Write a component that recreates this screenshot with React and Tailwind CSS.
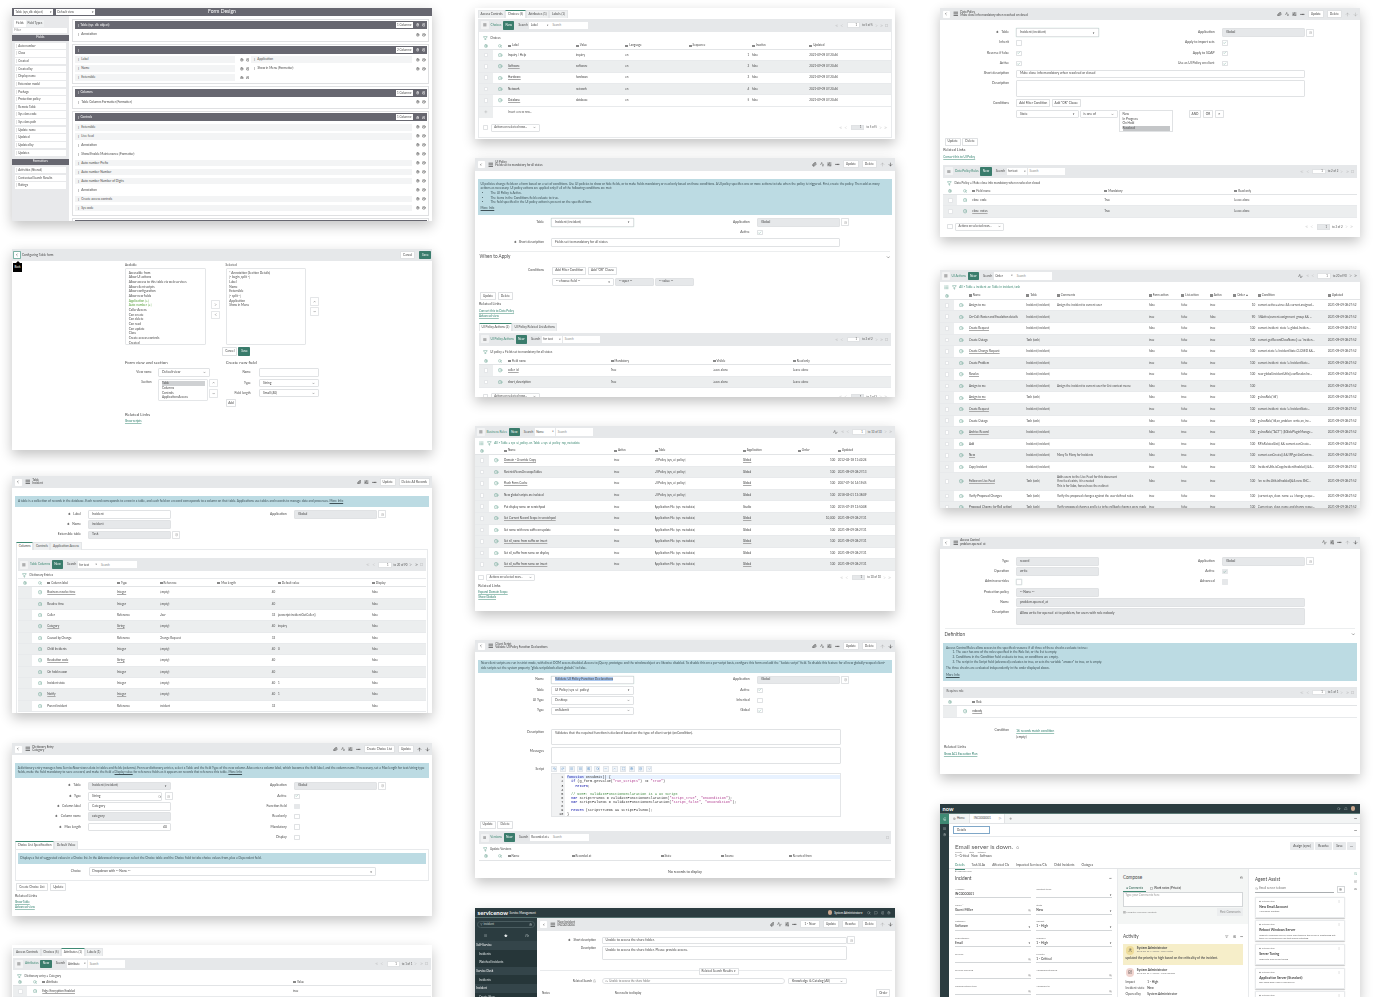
import React from "react";
import {
  Activity, ArrowDown, ArrowUp, Bell, Check, ChevronDown, ChevronLeft, ChevronRight, ChevronUp, ChevronsLeft,
  ChevronsRight, CircleHelp, CircleX, Clock, Filter, Home, Info, Lock, Menu, MessageSquare, Maximize, MoreHorizontal,
  Paperclip, Plus, Search, Settings, SlidersHorizontal, Star, User, Undo2, Redo2, List, SquarePen, Bookmark, FileText,
} from "lucide-react";

// everything below is measured in the coordinates of a 3x crop, the wrapper zooms it back down
const link = "text-[#2f7f6d] underline decoration-[#9cc4b9]";

function Card({ className, children }) {
  return (
    <section className={`w-[1260px] shrink-0 bg-white shadow-[0_16px_36px_rgba(0,0,0,0.24)] overflow-hidden ${className}`}>
      <div className="blur-[0.7px] h-full">{children}</div>
    </section>
  );
}

function Btn({ children, className = "" }) {
  return (
    <span className={`inline-flex items-center justify-center h-[24px] px-[6px] bg-white border border-[#dfe1e3] rounded-[2px] text-[9.5px] text-[#4a4a4a] whitespace-nowrap ${className}`}>
      {children}
    </span>
  );
}

function HeadIcons({ clip = true, pulse = true, sliders = true, dots = true, up = true, down = true, children }) {
  return (
    <div className="ml-auto flex items-center gap-[9px] text-[#444]">
      {clip && <Paperclip size={14} strokeWidth={3} />}
      {pulse && <Activity size={14} strokeWidth={2} />}
      {sliders && <SlidersHorizontal size={14} strokeWidth={2.5} />}
      {dots && <MoreHorizontal size={14} strokeWidth={3} />}
      {children}
      {up && <ArrowUp size={15} strokeWidth={up === "dim" ? 1.5 : 2.5} className={up === "dim" ? "text-[#999]" : ""} />}
      {down && <ArrowDown size={15} strokeWidth={down === "dim" ? 1.5 : 2.5} className={down === "dim" ? "text-[#999]" : ""} />}
    </div>
  );
}

function Header({ title, sub, children }) {
  return (
    <div className="flex items-center h-[37px] bg-[#e6e8ea] pl-[8px] pr-[6px]">
      <span className="flex items-center justify-center w-[21px] h-[21px] bg-white rounded-[2px]">
        <ChevronLeft size={11} strokeWidth={3} color="#333" />
      </span>
      <Menu size={17} strokeWidth={3} color="#444" className="ml-[9px]" />
      <div className="ml-[6px] text-[9px] leading-[10px] text-[#444]">
        <div>{title}</div>
        <div>{sub}</div>
      </div>
      {children}
    </div>
  );
}

function Note({ children, className = "" }) {
  return <div className={`bg-[#bcdbe3] text-[9.5px] leading-[14px] text-[#3f5258] px-[8px] py-[8px] ${className}`}>{children}</div>;
}

function Req() {
  return <span className="text-[#4a4a4a] text-[8px] mr-[7px]">✱</span>;
}

function Row({ label, req, right, className = "", children }) {
  return (
    <div className={`flex items-center h-[26px] mb-[5px] ${className}`}>
      <div className={`text-right text-[10px] text-[#4a4a4a] whitespace-nowrap ${right ? "w-[224px]" : "w-[207px]"}`}>
        {req && <Req />}
        {label}
      </div>
      <div className={`flex items-center gap-[5px] ${right ? "ml-[23px]" : "ml-[22px]"}`}>{children}</div>
    </div>
  );
}

function Box({ children, gray, focus, arrow, className = "w-[247px] h-[26px]" }) {
  return (
    <div className={`flex items-center justify-between px-[8px] rounded-[3px] border text-[10px] text-[#4a4a4a] whitespace-nowrap overflow-hidden ${gray ? "bg-[#e6e8ea] border-[#e0e2e4]" : "bg-white border-[#e0e2e4]"} ${focus ? "border-[#7fb3a6] shadow-[0_0_3px_#7fb3a6]" : ""} ${className}`}>
      <span>{children}</span>
      {arrow === "solid" && <span className="text-[8px]">▼</span>}
      {arrow === "line" && <ChevronDown size={9} strokeWidth={3} />}
    </div>
  );
}

function LookupBtn() {
  return (
    <span className="flex items-center justify-center w-[24px] h-[24px] bg-white border border-[#e0e2e4] rounded-[2px]">
      <Info size={10} color="#888" />
    </span>
  );
}

function Tick({ on, gray, focus }) {
  return (
    <span className={`flex items-center justify-center w-[16px] h-[16px] rounded-[2px] border ${gray ? "bg-[#e6e8ea] border-[#e6e8ea]" : "bg-white border-[#e0e2e4]"} ${focus ? "border-[#7fb3a6] shadow-[0_0_3px_#7fb3a6]" : ""}`}>
      {on && <Check size={11} strokeWidth={2.5} color="#3f8a74" />}
    </span>
  );
}

function Tabs({ items, active, className = "" }) {
  return (
    <div className={`flex items-end h-[24px] text-[9.5px] text-[#4a4a4a] ${className}`}>
      {items.map((t, i) => (
        <span
          key={t}
          className={`flex items-center h-[24px] px-[5px] border-x border-[#e4e6e8] whitespace-nowrap ${i === active ? "bg-white border-t-2 border-t-[#3f8a74]" : "bg-[#eef0f1] border-t border-t-[#e4e6e8]"}`}
        >
          {t}
        </span>
      ))}
    </div>
  );
}

function Pager({ text, light, w = "w-[40px]", flush }) {
  const arrow = light ? "#999" : "#555";
  return (
    <div className={`flex items-center gap-[6px] text-[8.5px] text-[#5a5a5a] whitespace-nowrap ${flush ? "" : "ml-auto"}`}>
      <ChevronsLeft size={10} color="#999" />
      <ChevronLeft size={10} color="#999" />
      <span className={`flex items-center justify-end h-[17px] px-[6px] ml-[4px] bg-white border border-[#e0e2e4] ${w}`}>1</span>
      <span>{text}</span>
      <ChevronRight size={10} color={arrow} strokeWidth={light ? 2 : 3} />
      <ChevronsRight size={10} color={arrow} strokeWidth={light ? 2 : 3} />
    </div>
  );
}

function ListBar({ title, search, pager, className = "", end, pulse, dark }) {
  return (
    <div className={`flex items-center h-[38px] bg-[#e6e8ea] pl-[6px] pr-[8px] ${className}`}>
      <span className="flex items-center justify-center w-[24px] h-[24px] bg-[#f2f3f4] rounded-[2px]">
        <Menu size={11} strokeWidth={3} color="#444" />
      </span>
      <span className="ml-[5px] text-[9.5px] text-[#3f8a74] whitespace-nowrap">{title}</span>
      <span className="ml-[5px] flex items-center justify-center w-[34px] h-[26px] bg-[#3a7c6c] rounded-[2px] text-white text-[9.5px]">New</span>
      <span className="ml-[12px] text-[9.5px] text-[#4a4a4a]">Search</span>
      <span className="ml-[5px] flex items-center justify-between w-[62px] h-[22px] px-[4px] bg-white text-[9px] text-[#4a4a4a] whitespace-nowrap overflow-hidden">
        {search}
        <span className="text-[7px]">▼</span>
      </span>
      <span className="ml-[1px] flex items-center w-[113px] h-[22px] px-[6px] bg-white text-[9px] text-[#888]">Search</span>
      {pulse && <Activity size={14} color="#444" className="ml-auto mr-[8px]" />}
      {pager && <Pager text={pager} light={!dark} flush={pulse} />}
      {end !== false && <Maximize size={9} color="#888" className={pager ? "ml-[6px]" : "ml-auto"} />}
    </div>
  );
}

function FilterRow({ text, list, className = "mt-[8px]" }) {
  return (
    <div className={`flex items-center h-[18px] pl-[12px] text-[9px] text-[#4a4a4a] ${className}`}>
      {list && <List size={14} color="#3f8a74" className="mr-[10px]" />}
      <Filter size={14} color="#3f8a74" />
      <span className={`ml-[8px] ${list ? "text-[#3f8a74]" : ""}`}>{text}</span>
    </div>
  );
}

function ColHead({ cols, className = "h-[22px]", noSearch }) {
  return (
    <div className={`flex items-center border-b-2 border-[#e2e4e6] text-[9px] text-[#4a4a4a] ${className}`}>
      <span className="w-[42px] flex justify-center"><Settings size={12} color="#3f8a74" /></span>
      <span className="w-[45px] flex justify-center">{!noSearch && <Search size={12} color="#3f8a74" />}</span>
      {cols.map((c) => (
        <span key={c.label} className={`flex items-center gap-[3px] whitespace-nowrap ${c.w}`}>
          <span className="w-[9px] h-[7px] bg-[#888]" />
          {c.label}
        </span>
      ))}
    </div>
  );
}

function RowCell({ col, value }) {
  return (
    <span className={`whitespace-nowrap overflow-hidden ${col.w} ${col.right ? "text-right pr-[8px]" : ""} ${col.link ? "underline decoration-[#aaa] text-[#444]" : ""}`}>
      {value}
    </span>
  );
}

function ListRows({ cols, rows, noBox, tall = "h-[34px]" }) {
  return rows.map((r, i) => (
    <div key={i} className={`flex items-center border-b border-[#e8eaec] text-[9px] text-[#4a4a4a] ${r.tall ? "h-[52px]" : tall} ${i % 2 ? "bg-[#eceeef]" : "bg-white"}`}>
      <span className="w-[42px] h-full flex items-center justify-center bg-[#eceeef]">
        {!noBox && <span className="w-[14px] h-[14px] bg-white border border-[#e4e6e8] rounded-[2px]" />}
      </span>
      <span className="w-[45px] flex justify-center"><Info size={13} color="#3f8a74" /></span>
      {cols.map((c, j) => (
        <RowCell key={c.label} col={c} value={r[j]} />
      ))}
    </div>
  ));
}

function ActionsRow({ text, className = "" }) {
  return (
    <div className={`flex items-center h-[26px] pl-[12px] pr-[10px] ${className}`}>
      <span className="w-[16px] h-[16px] bg-white border border-[#e0e2e4] rounded-[2px]" />
      <Box arrow="line" className="ml-[7px] w-[148px] h-[24px]"><span className="text-[8.5px]">Actions on selected rows...</span></Box>
      <Pager text={text} light w="w-[40px] !bg-[#e6e8ea]" />
    </div>
  );
}

function Related({ links, className = "", big }) {
  return (
    <div className={className}>
      <div className={`${big ? "text-[13px]" : "text-[11.5px]"} text-[#4a4a4a] leading-[14px]`}>Related Links</div>
      <div className="mt-[6px] text-[9px] leading-[14px]">
        {links.map((l) => (
          <div key={l} className={link}>{l}</div>
        ))}
      </div>
    </div>
  );
}

/* ---------- first column ---------- */

const fdFields = ["Auto number", "Class", "Created", "Created by", "Display name", "Extension model", "Package", "Protection policy", "Remote Table", "Sys class code", "Sys class path", "Update name", "Updated", "Updated by", "Updates"];

function FdHead({ title, columns }) {
  return (
    <div className="flex items-center h-[24px] bg-[#676770] pl-[6px] pr-[5px] text-[9.5px] text-white">
      <span>⋮ {title}</span>
      <span className="ml-auto flex items-center h-[18px] px-[2px] bg-white text-[#4a4a4a] text-[9px]">{columns} ▾</span>
      <Settings size={11} strokeWidth={3} className="ml-[8px]" />
      <CircleX size={11} strokeWidth={3} className="ml-[7px]" />
    </div>
  );
}

function FdRow({ name, gray }) {
  return (
    <div className="flex items-center h-[27px] text-[9.5px] text-[#4a4a4a]">
      <span className={`flex-1 flex items-center h-[20px] pl-[6px] ${gray ? "bg-[#f3f4f5]" : ""}`}>⋮&nbsp;&nbsp;{name}</span>
      <span className="flex items-center justify-end gap-[7px] w-[46px] pr-[4px]">
        <Settings size={11} strokeWidth={3} color="#555" />
        <CircleX size={11} strokeWidth={3} color="#555" />
      </span>
    </div>
  );
}

function FdSection({ children, className = "" }) {
  return <div className={`border-2 border-[#dfe0e2] p-[4px] mb-[6px] ${className}`}>{children}</div>;
}

function FormDesign() {
  return (
    <Card className="h-[639px]">
      <div className="grid grid-cols-3 items-center h-[25px] bg-[#676770] text-white">
        <div className="flex gap-[8px] pl-[6px]">
          <span className="flex items-center justify-between w-[118px] h-[19px] px-[4px] bg-white text-[9px] text-[#4a4a4a]">Table (sys_db_object)<span>▾</span></span>
          <span className="flex items-center justify-between w-[118px] h-[19px] px-[4px] bg-white text-[9px] text-[#4a4a4a]">Default view<span>▾</span></span>
        </div>
        <div className="text-center text-[15px]">Form Design</div>
      </div>
      <div className="flex h-[614px]">
        <div className="w-[170px] shrink-0 bg-[#e8e9eb]">
          <div className="flex items-end h-[32px] pl-[6px] text-[9px] text-[#4a4a4a]">
            <span className="flex items-center h-[22px] px-[6px] bg-white">Fields</span>
            <span className="flex items-center h-[22px] px-[6px] bg-[#eef0f1]">Field Types</span>
          </div>
          <div className="mx-[4px] mt-[2px] h-[17px] pl-[3px] bg-white text-[9px] text-[#888] leading-[17px]">Filter</div>
          <div className="mt-[5px] h-[17px] bg-[#676770] text-white text-[9.5px] text-center leading-[17px]">Fields</div>
          <div className="flex flex-col gap-[4px] px-[8px] mt-[6px]">
            {fdFields.map((f) => (
              <div key={f} className="h-[19px] pl-[4px] bg-white text-[9px] text-[#4a4a4a] leading-[19px]">⁞&nbsp;&nbsp;{f}</div>
            ))}
          </div>
          <div className="mt-[10px] h-[17px] bg-[#676770] text-white text-[9.5px] text-center leading-[17px]">Formatters</div>
          <div className="flex flex-col gap-[4px] px-[8px] mt-[6px]">
            {["Activities (filtered)", "Contextual Search Results", "Ratings"].map((f) => (
              <div key={f} className="h-[19px] pl-[4px] bg-white text-[9px] text-[#4a4a4a] leading-[19px]">⁞&nbsp;&nbsp;{f}</div>
            ))}
          </div>
        </div>
        <div className="flex-1 pl-[11px] pr-[8px] pt-[8px] min-w-0">
          <FdSection>
            <FdHead title="Table (sys_db_object)" columns="1 Column" />
            <div className="pt-[3px]"><FdRow name="Annotation" /></div>
          </FdSection>
          <FdSection>
            <FdHead title="" columns="2 Column" />
            <div className="flex pt-[4px]">
              <div className="flex-1">
                <FdRow name="Label" gray />
                <FdRow name="Name" gray />
                <FdRow name="Extensible" gray />
              </div>
              <div className="flex-1">
                <FdRow name="Application" gray />
                <FdRow name="Show in Menu (Formatter)" />
              </div>
            </div>
          </FdSection>
          <FdSection>
            <FdHead title="Columns" columns="1 Column" />
            <div className="pt-[3px]"><FdRow name="Table Columns Formatter (Formatter)" /></div>
          </FdSection>
          <FdSection>
            <FdHead title="Controls" columns="1 Column" />
            <div className="pt-[4px] pb-[2px]">
              <FdRow name="Extensible" gray />
              <FdRow name="Live feed" gray />
              <FdRow name="Annotation" />
              <FdRow name="Show/Enable Maintenance (Formatter)" />
              <FdRow name="Auto number Prefix" gray />
              <FdRow name="Auto number Number" gray />
              <FdRow name="Auto number Number of Digits" gray />
              <FdRow name="Annotation" />
              <FdRow name="Create access controls" gray />
              <FdRow name="Sys code" gray />
            </div>
          </FdSection>
          <FdSection>
            <FdHead title="Application Access" columns="1 Column" />
          </FdSection>
        </div>
      </div>
    </Card>
  );
}

function ListBoxItems({ items, className = "" }) {
  return (
    <div className={`border border-[#e4e6e8] rounded-[3px] px-[8px] py-[5px] text-[9.5px] leading-[14px] text-[#4a4a4a] whitespace-nowrap overflow-hidden ${className}`}>
      {items.map((t) => (
        <div key={t} className={t.includes("[+]") ? "text-[#5aa33f]" : ""}>{t}</div>
      ))}
    </div>
  );
}

function SquareBtn({ children }) {
  return <span className="flex items-center justify-center w-[26px] h-[26px] bg-white border border-[#e4e6e8] rounded-[2px]">{children}</span>;
}

function UpDown() {
  return (
    <div className="flex flex-col gap-[5px]">
      <SquareBtn><ChevronUp size={10} strokeWidth={3} color="#555" /></SquareBtn>
      <SquareBtn><ChevronDown size={10} strokeWidth={3} color="#555" /></SquareBtn>
    </div>
  );
}

function Configure() {
  return (
    <Card className="h-[603px]">
      <div className="relative flex items-center h-[36px] bg-[#e6e8ea] pl-[4px] pr-[2px] text-[9.5px] text-[#4a4a4a]">
        <span className="flex items-center justify-center w-[22px] h-[22px] bg-white rounded-[2px] border-2 border-[#7fb3a6]">
          <ChevronLeft size={11} strokeWidth={3} color="#333" />
        </span>
        <span className="ml-[4px]">Configuring Table form</span>
        <Btn className="ml-auto">Cancel</Btn>
        <span className="ml-[12px] flex items-center justify-center w-[36px] h-[24px] bg-[#3a7c6c] text-white rounded-[2px]">Save</span>
        <span className="absolute left-[11px] top-[35px] w-0 h-0 border-x-[8px] border-x-transparent border-b-[8px] border-b-black" />
        <span className="absolute left-[2px] top-[43px] w-[29px] h-[26px] flex items-center justify-center bg-black text-white text-[8.5px]">Back</span>
      </div>
      <div className="ml-[339px] w-[590px] text-[9.5px] text-[#4a4a4a]">
        <div className="flex mt-[5px]">
          <div>
            <div className="h-[16px] text-[9px] leading-[14px]">Available</div>
            <ListBoxItems
              className="w-[242px] h-[232px]"
              items={["Accessible from", "Allow UI actions", "Allow access to this table via web services", "Allow client scripts", "Allow configuration", "Allow new fields", "Application [+]", "Auto number [+]", "Caller Access", "Can create", "Can delete", "Can read", "Can update", "Class", "Create access controls", "Created"]}
            />
          </div>
          <div className="w-[60px] flex flex-col items-center gap-[5px] pt-[113px]">
            <SquareBtn><ChevronRight size={10} strokeWidth={3} color="#555" /></SquareBtn>
            <SquareBtn><ChevronLeft size={10} strokeWidth={3} color="#555" /></SquareBtn>
          </div>
          <div>
            <div className="h-[16px] text-[9px] leading-[14px]">Selected</div>
            <ListBoxItems
              className="w-[242px] h-[232px]"
              items={["* Annotation (Section Details)", "|- begin_split -|", "Label", "Name", "Extensible", "|- split -|", "Application", "Show in Menu"]}
            />
          </div>
          <div className="ml-[12px] pt-[103px]"><UpDown /></div>
        </div>
        <div className="flex justify-center gap-[3px] mt-[5px] w-[668px]">
          <Btn className="!h-[26px]">Cancel</Btn>
          <span className="flex items-center justify-center w-[36px] h-[26px] bg-[#3a7c6c] text-white rounded-[2px]">Save</span>
        </div>
        <div className="flex mt-[14px] text-[13px]">
          <div className="w-[302px]">Form view and section</div>
          <div>Create new field</div>
        </div>
        <div className="flex mt-[5px]">
          <div className="w-[302px]">
            <div className="flex items-center">
              <span className="w-[80px] text-right">View name</span>
              <Box arrow="line" className="ml-[20px] w-[155px] h-[25px]">Default view</Box>
            </div>
            <div className="flex mt-[6px]">
              <span className="w-[80px] text-right pt-[4px]">Section</span>
              <div className="ml-[20px] w-[150px] h-[68px] border border-[#e4e6e8] rounded-[3px] px-[8px] py-[5px] leading-[14px] overflow-hidden">
                <div className="bg-[#cfd1d3]">Table</div>
                <div>Columns</div>
                <div>Controls</div>
                <div>Application Access</div>
                <div>...</div>
              </div>
              <div className="ml-[3px]"><UpDown /></div>
            </div>
          </div>
          <div>
            <div className="flex items-center">
              <span className="w-[75px] text-right">Name</span>
              <Box className="ml-[26px] w-[178px] h-[25px]" />
            </div>
            <div className="flex items-center mt-[7px]">
              <span className="w-[75px] text-right">Type</span>
              <Box arrow="line" className="ml-[26px] w-[178px] h-[25px]">String</Box>
            </div>
            <div className="flex items-center mt-[5px]">
              <span className="w-[75px] text-right">Field length</span>
              <Box arrow="line" className="ml-[26px] w-[178px] h-[25px]">Small (40)</Box>
            </div>
            <Btn className="mt-[6px] w-[32px]">Add</Btn>
          </div>
        </div>
        <Related big className="mt-[16px]" links={["Show scripts"]} />
      </div>
    </Card>
  );
}

const columnCols = [
  { label: "Column label", w: "w-[209px]", link: true },
  { label: "Type", w: "w-[128px]", link: true },
  { label: "Reference", w: "w-[173px]" },
  { label: "Max length", w: "w-[182px]", right: true },
  { label: "Default value", w: "w-[282px]" },
  { label: "Display", w: "w-[100px]" },
];

const columnRows = [
  ["Business resolve time", "Integer", "(empty)", "40", "", "false"],
  ["Resolve time", "Integer", "(empty)", "40", "", "false"],
  ["Caller", "Reference", "User", "32", "javascript:incidentGetCaller()", "false"],
  ["Category", "String", "(empty)", "40", "inquiry", "false"],
  ["Caused by Change", "Reference", "Change Request", "32", "", "false"],
  ["Child Incidents", "Integer", "(empty)", "40", "0", "false"],
  ["Resolution code", "String", "(empty)", "40", "", "false"],
  ["On hold reason", "Integer", "(empty)", "40", "", "false"],
  ["Incident state", "Integer", "(empty)", "40", "1", "false"],
  ["Notify", "Integer", "(empty)", "40", "1", "false"],
  ["Parent Incident", "Reference", "Incident", "32", "", "false"],
];

function TableIncident() {
  return (
    <Card className="h-[712px]">
      <Header title="Table" sub="Incident">
        <HeadIcons pulse={false} up={false} down={false}>
          <Btn>Update</Btn>
          <Btn>Delete All Records</Btn>
        </HeadIcons>
      </Header>
      <div className="px-[10px]">
        <Note className="mt-[24px] h-[31px] !py-[1px] leading-[29px]">
          A table is a collection of records in the database. Each record corresponds to a row in a table, and each field on a record corresponds to a column on that table. Applications use tables and records to manage data and processes. <span className="underline">More Info</span>
        </Note>
      </div>
      <div className="flex mt-[10px]">
        <div className="w-[600px]">
          <Row label="Label" req><Box>Incident</Box></Row>
          <Row label="Name" req><Box gray>incident</Box></Row>
          <Row label="Extensible table"><Box gray>Task</Box><LookupBtn /></Row>
        </div>
        <div>
          <Row label="Application" right><Box gray>Global</Box><LookupBtn /></Row>
        </div>
      </div>
      <div className="mx-[12px] mt-[3px]">
        <Tabs items={["Columns", "Controls", "Application Access"]} active={0} />
        <div className="border border-[#e8eaec] px-[4px] pt-[24px] pb-[2px] -mt-[1px]">
          <ListBar title="Table Columns" search="for text" pager="to 20 of 90" dark />
          <FilterRow text="Dictionary Entries" className="mt-[4px]" />
          <ColHead cols={columnCols} className="h-[27px] border-t border-t-[#e8eaec]" />
          <ListRows cols={columnCols} rows={columnRows} noBox />
        </div>
      </div>
    </Card>
  );
}

function DictEntry() {
  return (
    <Card className="h-[520px]">
      <Header title="Dictionary Entry" sub="Category">
        <HeadIcons>
          <Btn>Create Choice List</Btn>
          <Btn>Update</Btn>
        </HeadIcons>
      </Header>
      <div className="px-[9px]">
        <Note className="mt-[23px] h-[46px]">
          A dictionary entry manages how ServiceNow stores data in tables and fields (columns). For new dictionary entries, select a Table and the field Type of the new column. Also enter a column label, which becomes the field label, and the column name. If necessary, set a Max length for text/string type fields, make the field mandatory to save a record, and make the field a <span className="underline">Display value</span> for reference fields as it appears on records that reference this table. <span className="underline">More Info</span>
        </Note>
      </div>
      <div className="flex mt-[10px]">
        <div className="w-[600px]">
          <Row label="Table" req><Box gray arrow="solid">Incident [incident]</Box></Row>
          <Row label="Type" req><Box className="w-[222px] h-[26px]">String</Box><Search size={10} color="#777" className="-ml-[18px] mr-[5px]" /><LookupBtn /></Row>
          <Row label="Column label" req><Box>Category</Box></Row>
          <Row label="Column name" req><Box gray>category</Box></Row>
          <Row label="Max length" req><Box className="w-[247px] h-[26px] justify-end"><span className="ml-[208px]">40</span></Box></Row>
        </div>
        <div>
          <Row label="Application" right><Box gray>Global</Box><LookupBtn /></Row>
          <Row label="Active" right><Tick on /></Row>
          <Row label="Function field" right><Tick gray /></Row>
          <Row label="Read only" right><Tick /></Row>
          <Row label="Mandatory" right><Tick /></Row>
          <Row label="Display" right><Tick /></Row>
        </div>
      </div>
      <div className="mx-[9px] mt-[-8px]">
        <Tabs items={["Choice List Specification", "Default Value"]} active={0} />
        <div className="border border-[#e8eaec] px-[5px] pt-[10px] pb-[14px]">
          <Note className="h-[32px] !py-[1px] leading-[30px]">
            Displays a list of suggested values in a Choice list. In the Advanced view you can select the Choice table and the Choice field to take choice values from, plus a Dependent field.
          </Note>
          <div className="flex items-center mt-[11px]">
            <span className="w-[190px] text-right text-[10px] text-[#4a4a4a]">Choice</span>
            <Box arrow="solid" className="ml-[23px] w-[862px] h-[25px]">Dropdown with -- None --</Box>
          </div>
        </div>
        <div className="flex gap-[8px] mt-[5px] pl-[4px]">
          <Btn>Create Choice List</Btn>
          <Btn>Update</Btn>
        </div>
        <Related className="mt-[8px]" links={["Show Table", "Advanced view"]} />
      </div>
    </Card>
  );
}

const attrCols = [
  { label: "Attribute", w: "w-[752px]", link: true },
  { label: "Value", w: "w-[200px]" },
];

function Attributes() {
  return (
    <Card className="h-[200px]">
      <div className="px-[4px] pt-[10px]">
        <Tabs items={["Access Controls", "Choices (5)", "Attributes (1)", "Labels (1)"]} active={2} />
        <ListBar className="mt-[4px]" title="Attributes" search="Attribute" pager="to 1 of 1" />
        <FilterRow text="Dictionary entry = Category" />
        <ColHead cols={attrCols} />
        <ListRows cols={attrCols} rows={[["Edge Encryption Enabled", "true"]]} />
      </div>
    </Card>
  );
}

/* ---------- second column ---------- */

const choiceCols = [
  { label: "Label", w: "w-[204px]", link: true },
  { label: "Value", w: "w-[148px]" },
  { label: "Language", w: "w-[190px]" },
  { label: "Sequence", w: "w-[190px]", right: true },
  { label: "Inactive", w: "w-[172px]" },
  { label: "Updated", w: "w-[200px]" },
];

function Choices() {
  return (
    <Card className="h-[394px]">
      <div className="px-[9px] pt-[5px]">
        <Tabs items={["Access Controls", "Choices (5)", "Attributes (1)", "Labels (1)"]} active={1} />
        <div className="border-x border-b border-[#e8eaec] mt-[4px] pb-[14px]">
          <ListBar title="Choices" search="Label" pager="to 5 of 5" />
          <FilterRow text="Choices" className="mt-[10px]" />
          <ColHead cols={choiceCols} className="h-[22px] mt-[5px]" />
          <ListRows
            cols={choiceCols}
            rows={[
              ["Inquiry / Help", "inquiry", "en", "1", "false", "2021-09-09 07:20:46"],
              ["Software", "software", "en", "2", "false", "2021-09-09 07:20:46"],
              ["Hardware", "hardware", "en", "3", "false", "2021-09-09 07:20:46"],
              ["Network", "network", "en", "4", "false", "2021-09-09 07:20:46"],
              ["Database", "database", "en", "5", "false", "2021-09-09 07:20:46"],
            ]}
          />
          <div className="flex items-center h-[34px] text-[9px] text-[#5a5a5a]">
            <span className="w-[42px] h-full flex items-center justify-center bg-[#eceeef]"><Plus size={11} color="#999" /></span>
            <span className="ml-[45px]">Insert a new row...</span>
          </div>
          <ActionsRow text="to 5 of 5" className="mt-[16px]" />
        </div>
      </div>
    </Card>
  );
}

const policyActionCols = [
  { label: "Field name", w: "w-[308px]", link: true },
  { label: "Mandatory", w: "w-[306px]" },
  { label: "Visible", w: "w-[241px]" },
  { label: "Read only", w: "w-[200px]" },
];

function UiPolicy() {
  return (
    <Card className="h-[715px]">
      <Header title="UI Policy" sub="Fields set to mandatory for all states">
        <HeadIcons up="dim">
          <Btn>Update</Btn>
          <Btn>Delete</Btn>
        </HeadIcons>
      </Header>
      <div className="px-[9px]">
        <Note className="mt-[25px] h-[107px]">
          UI policies change fields on a form based on a set of conditions. Use UI policies to show or hide fields, or to make fields mandatory or read only based on those conditions. A UI policy specifies one or more actions to take when the policy is triggered. First, create the policy. Then add as many actions as necessary. UI policy actions are applied only if all of the following conditions are met:
          <ul className="list-disc pl-[30px]">
            <li>The UI Policy is Active.</li>
            <li>The items in the Conditions field evaluate to true.</li>
            <li>The field specified in the UI policy action is present on the specified form.</li>
          </ul>
          <div className="underline mt-[2px]">More Info</div>
        </Note>
      </div>
      <div className="flex mt-[10px]">
        <div className="w-[600px]">
          <Row label="Table"><Box focus arrow="solid">Incident [incident]</Box></Row>
        </div>
        <div>
          <Row label="Application" right><Box gray>Global</Box><LookupBtn /></Row>
          <Row label="Active" right><Tick on /></Row>
        </div>
      </div>
      <Row label="Short description" req className="-mt-[1px]"><Box className="w-[865px] h-[26px]">Fields set to mandatory for all states</Box></Row>
      <div className="flex items-center justify-between h-[33px] mx-[14px] mt-[12px] border-t border-[#eceeef] text-[14px] text-[#4a4a4a]">
        When to Apply
        <ChevronDown size={14} strokeWidth={2.5} />
      </div>
      <div className="flex items-center h-[25px] mt-[14px]">
        <span className="w-[207px] text-right text-[10px] text-[#4a4a4a]">Conditions</span>
        <div className="ml-[25px] flex gap-[5px]"><Btn>Add Filter Condition</Btn><Btn>Add "OR" Clause</Btn></div>
      </div>
      <div className="flex gap-[4px] ml-[232px] mt-[8px]">
        <Box arrow="solid" className="w-[185px] h-[25px]">-- choose field --</Box>
        <Box gray className="w-[116px] h-[25px]">-- oper --</Box>
        <Box gray className="w-[116px] h-[25px]">-- value --</Box>
      </div>
      <div className="flex gap-[5px] ml-[15px] mt-[19px]"><Btn>Update</Btn><Btn>Delete</Btn></div>
      <Related className="ml-[12px] mt-[7px]" links={["Convert this to Data Policy", "Advanced view"]} />
      <div className="mx-[12px] mt-[14px]">
        <Tabs items={["UI Policy Actions (2)", "UI Policy Related List Actions"]} active={0} />
        <ListBar title="UI Policy Actions" search="for text" pager="to 2 of 2" className="mt-[6px]" />
        <FilterRow text="UI policy = Fields set to mandatory for all states" className="mt-[10px]" />
        <ColHead cols={policyActionCols} className="h-[24px] mt-[7px]" />
        <ListRows
          cols={policyActionCols}
          rows={[
            ["caller_id", "True", "Leave alone", "Leave alone"],
            ["short_description", "True", "Leave alone", "Leave alone"],
          ]}
        />
        <ActionsRow text="to 2 of 2" className="mt-[13px]" />
      </div>
    </Card>
  );
}

const ruleCols = [
  { label: "Name", w: "w-[330px]", link: true },
  { label: "Active", w: "w-[122px]" },
  { label: "Table", w: "w-[265px]" },
  { label: "Application", w: "w-[165px]", link: true },
  { label: "Order", w: "w-[120px]", right: true },
  { label: "Updated", w: "w-[170px]" },
];

function BusinessRules() {
  const filled = (name, table, app, order, upd) => [name, "true", table, app, order, upd];
  const ui = "UI Policy [sys_ui_policy]";
  const meta = "Application File [sys_metadata]";
  return (
    <Card className="h-[554px]">
      <ListBar title="Business Rules" search="Name" pager="to 10 of 10" end={false} pulse className="!h-[36px]" />
      <FilterRow list text="All > Table = sys_ui_policy .or. Table = sys_ui_policy_rsp_metadata" className="mt-[7px]" />
      <ColHead cols={ruleCols} noSearch className="h-[24px] mt-[3px]" />
      <ListRows
        cols={ruleCols}
        tall="h-[34.7px]"
        rows={[
          filled("Domain - Override Copy", ui, "Global", "100", "2012-02-18 11:42:24"),
          filled("RestrictViewsOn.scopeTables", ui, "Global", "100", "2021-09-09 08:27:13"),
          filled("Flush Form Cache", ui, "Global", "100", "2007-07-16 14:19:45"),
          filled("New global scripts are isolated", ui, "Global", "100", "2018-03-01 13:38:09"),
          filled("Put display name on scratchpad", meta, "Studio", "100", "2015-07-29 12:50:08"),
          filled("Set Current Record Scope in scratchpad", meta, "Global", "10,000", "2021-09-09 08:27:31"),
          filled("Set name with new suffix on update", meta, "Global", "100", "2021-09-09 08:27:31"),
          filled("Set sil_name from suffix on insert", meta, "Global", "100", "2021-09-09 08:27:31"),
          filled("Set sil_suffix from name on display", meta, "Global", "100", "2021-09-09 08:27:31"),
          filled("Set sil_suffix from name on insert", meta, "Global", "100", "2021-09-09 08:27:31"),
        ]}
      />
      <ActionsRow text="to 10 of 10" className="mt-[7px] !pl-[10px]" />
      <Related className="ml-[10px] mt-[6px]" links={["Expand Domain Scope", "Show Globals"]} />
    </Card>
  );
}

function Code({ c, children }) {
  return <span className={c}>{children}</span>;
}

const tools = [Undo2, Redo2, Menu, List, SlidersHorizontal, Search, ChevronDown, ChevronUp, Maximize, Settings, Info, Check];

function ClientScript() {
  const kw = "text-[#3a3fb8] font-bold";
  const str = "text-[#b03a8f]";
  const lines = [
    <><Code c={kw}>function</Code> onSubmit() {"{"}</>,
    <>{"  "}<Code c={kw}>if</Code> (g_form.getValue(<Code c={str}>"run_scripts"</Code>) != <Code c={str}>"true"</Code>)</>,
    <>{"    "}<Code c={kw}>return</Code>;</>,
    <></>,
    <>{"  "}<Code c="text-[#3f8a3f]">// NOTE: validateFunctionDeclaration is a UI Script</Code></>,
    <>{"  "}<Code c={kw}>var</Code> scriptTrueOK = validateFunctionDeclaration(<Code c={str}>"script_true"</Code>, <Code c={str}>"onCondition"</Code>);</>,
    <>{"  "}<Code c={kw}>var</Code> scriptFalseOK = validateFunctionDeclaration(<Code c={str}>"script_false"</Code>, <Code c={str}>"onCondition"</Code>);</>,
    <></>,
    <>{"  "}<Code c={kw}>return</Code> (scriptTrueOK && scriptFalseOK);</>,
    <>{"}"}</>,
  ];
  return (
    <Card className="h-[715px]">
      <Header title="Client Script" sub="Validate UI Policy Function Declarations">
        <HeadIcons up="dim">
          <Btn>Update</Btn>
          <Btn>Delete</Btn>
        </HeadIcons>
      </Header>
      <div className="px-[10px]">
        <Note className="mt-[24px] h-[37px] !py-[3px]">
          New client scripts are run in strict mode, with direct DOM access disabled. Access to jQuery, prototype and the window object are likewise disabled. To disable this on a per-script basis, configure this form and add the "Isolate script" field. To disable this feature for all new globally-scoped client-side scripts set the system property "glide.script.block.client.globals" to false.
        </Note>
      </div>
      <div className="flex mt-[9px]">
        <div className="w-[600px]">
          <Row label="Name"><Box focus><span className="bg-[#a9c7f0]">Validate UI Policy Function Declarations</span></Box></Row>
          <Row label="Table"><Box arrow="solid">UI Policy [sys_ui_policy]</Box></Row>
          <Row label="UI Type"><Box arrow="line">Desktop</Box></Row>
          <Row label="Type"><Box arrow="line">onSubmit</Box></Row>
        </div>
        <div>
          <Row label="Application" right><Box gray>Global</Box><LookupBtn /></Row>
          <Row label="Active" right><Tick on /></Row>
          <Row label="Inherited" right><Tick /></Row>
          <Row label="Global" right><Tick on /></Row>
        </div>
      </div>
      <div className="flex mt-[36px]">
        <span className="w-[207px] text-right text-[10px] text-[#4a4a4a] pt-[4px]">Description</span>
        <Box className="ml-[22px] w-[868px] h-[50px] !items-start pt-[4px]">Validates that the required function is declared based on the type of client script (onCondition).</Box>
      </div>
      <div className="flex mt-[6px]">
        <span className="w-[207px] text-right text-[10px] text-[#4a4a4a] pt-[4px]">Messages</span>
        <Box className="ml-[22px] w-[868px] h-[50px]" />
      </div>
      <div className="flex mt-[6px]">
        <span className="w-[207px] text-right text-[10px] text-[#4a4a4a] pt-[2px]">Script</span>
        <div className="ml-[5px]">
          <div className="flex items-center gap-[8px] h-[18px] ml-[17px]">
            {tools.map((Ic, i) => (
              <span key={i} className="flex items-center justify-center w-[18px] h-[18px] bg-[#f2f5f8] border border-[#e2e6ea]">
                <Ic size={10} color="#3f7fc0" />
              </span>
            ))}
          </div>
          <div className="flex ml-[17px] mt-[4px] w-[868px] h-[132px] border border-[#e4e6e8] text-[10.5px] leading-[12.2px] text-[#333] [font-family:'Liberation_Mono',monospace]">
            <div className="w-[38px] shrink-0 bg-[#f1f2f3] text-right pr-[5px] pt-[3px]">
              {lines.map((_, i) => <div key={i} className="h-[12.2px]">{i + 1}</div>)}
            </div>
            <div className="flex-1 pl-[6px] pt-[3px]">
              {lines.map((l, i) => <div key={i} className={`h-[12.2px] whitespace-pre ${i === 0 ? "bg-[#e8f2ff]" : ""}`}>{l}</div>)}
            </div>
          </div>
        </div>
      </div>
      <div className="flex gap-[5px] ml-[14px] mt-[10px]"><Btn>Update</Btn><Btn>Delete</Btn></div>
      <div className="mx-[11px] mt-[8px]">
        <ListBar title="Versions" search="Recorded at" />
        <FilterRow text="Update Versions" />
        <ColHead
          className="h-[24px]"
          cols={[
            { label: "Name", w: "w-[192px]" },
            { label: "Recorded at", w: "w-[267px]" },
            { label: "State", w: "w-[181px]" },
            { label: "Source", w: "w-[204px]" },
            { label: "Reverted from", w: "w-[200px]" },
          ]}
        />
        <div className="mt-[24px] text-center text-[11px] text-[#4a4a4a]">No records to display</div>
      </div>
    </Card>
  );
}

function NavSection({ title, items }) {
  return (
    <>
      <div className="flex items-center h-[26px] pl-[4px] bg-[#34454a] text-[9px] text-white">{title}</div>
      {items.map((t) => (
        <div key={t} className="flex items-center h-[26px] pl-[12px] bg-[#263639] text-[9px] text-[#dde3e4]">{t}</div>
      ))}
    </>
  );
}

function ServiceManagement() {
  return (
    <Card className="h-[300px]">
      <div className="flex items-center h-[30px] bg-[#2b3c40] border-b-2 border-[#55706f] pl-[8px] pr-[12px] text-white">
        <span className="text-[18px] font-bold leading-none">servicenow</span>
        <span className="ml-[5px] text-[8.5px]">Service Management</span>
        <span className="ml-auto w-[14px] h-[14px] rounded-full bg-[#c9a58c]" />
        <span className="ml-[5px] text-[8.5px]">System Administrator ▾</span>
        <Search size={11} className="ml-[12px]" color="#b9c4c5" />
        <MessageSquare size={11} className="ml-[9px]" color="#b9c4c5" />
        <CircleHelp size={11} className="ml-[9px]" color="#b9c4c5" />
        <Settings size={11} className="ml-[9px]" color="#b9c4c5" />
      </div>
      <div className="flex">
        <div className="w-[187px] shrink-0 h-[270px] bg-[#2b3c40]">
          <div className="flex items-center justify-between mx-[6px] mt-[8px] h-[22px] px-[6px] rounded-full border border-[#4a5c60] text-[9px] text-[#cdd5d6]">
            <Filter size={8} /><span className="flex-1 ml-[3px]">incident</span><Settings size={10} />
          </div>
          <div className="flex items-center justify-around h-[28px] mt-[8px] text-[#cdd5d6]">
            <List size={11} /><Star size={11} fill="#fff" /><Clock size={11} />
          </div>
          <div className="mt-[2px]">
            <NavSection title="Self-Service" items={["Incidents", "Watched Incidents"]} />
            <NavSection title="Service Desk" items={["Incidents"]} />
            <NavSection title="Incident" items={["Create New"]} />
          </div>
        </div>
        <div className="flex-1 min-w-0">
          <Header title="New Incident" sub="INC0010004">
            <HeadIcons up="dim">
              <Btn className="w-[60px]">1 - New</Btn>
              <Btn>Update</Btn>
              <Btn>Resolve</Btn>
              <Btn>Delete</Btn>
            </HeadIcons>
          </Header>
          <div className="flex items-center mt-[18px] h-[22px]">
            <span className="w-[176px] text-right text-[9px] text-[#4a4a4a]"><Req />Short description</span>
            <Box className="ml-[18px] w-[736px] h-[22px]">Unable to access the share folder.</Box>
            <LookupBtn />
          </div>
          <div className="flex mt-[5px]">
            <span className="w-[176px] text-right text-[9px] text-[#4a4a4a]">Description</span>
            <Box className="ml-[18px] w-[736px] h-[42px] !items-start pt-[3px]">Unable to access the share folder. Please provide access.</Box>
          </div>
          <div className="relative mx-[8px] mt-[31px] border-t border-[#e8eaec]">
            <span className="absolute left-[476px] -top-[11px]"><Btn className="!h-[21px]">Related Search Results ▾</Btn></span>
          </div>
          <div className="flex items-center mt-[20px]">
            <span className="w-[176px] text-right text-[9px] text-[#4a4a4a]">Related Search ⓘ</span>
            <div className="ml-[18px] flex items-center w-[550px] h-[21px] px-[6px] rounded-full border border-[#e0e2e4] text-[8.5px] text-[#777]">
              <Search size={9} className="mr-[4px]" />Unable to access the share folder
            </div>
            <Box arrow="line" className="ml-[9px] w-[176px] h-[21px]">Knowledge & Catalog (All)</Box>
          </div>
          <div className="flex items-center mt-[15px] pl-[14px] pr-[14px] text-[9px] text-[#4a4a4a]">
            <span>Notes</span>
            <span className="ml-[195px]">No results to display</span>
            <Btn className="ml-auto">Order</Btn>
          </div>
        </div>
      </div>
    </Card>
  );
}

/* ---------- third column ---------- */

const dpCols = [
  { label: "Field name", w: "w-[396px]", link: true },
  { label: "Mandatory", w: "w-[390px]" },
  { label: "Read only", w: "w-[300px]" },
];

function DataPolicy() {
  return (
    <Card className="h-[686px]">
      <Header title="Data Policy" sub="Make close info mandatory when resolved or closed">
        <HeadIcons up="dim" down="dim">
          <Btn>Update</Btn>
          <Btn>Delete</Btn>
        </HeadIcons>
      </Header>
      <div className="flex mt-[24px]">
        <div className="w-[600px]">
          <Row label="Table" req><Box focus arrow="solid">Incident [incident]</Box></Row>
          <Row label="Inherit"><Tick /></Row>
          <Row label="Reverse if false"><Tick on /></Row>
          <Row label="Active"><Tick on /></Row>
        </div>
        <div>
          <Row label="Application" right><Box gray>Global</Box><LookupBtn /></Row>
          <Row label="Apply to import sets" right><Tick on /></Row>
          <Row label="Apply to SOAP" right><Tick on /></Row>
          <Row label="Use as UI Policy on client" right><Tick on /></Row>
        </div>
      </div>
      <Row label="Short description"><Box className="w-[865px] h-[26px]">Make close info mandatory when resolved or closed</Box></Row>
      <div className="flex mt-[1px]">
        <span className="w-[207px] text-right text-[10px] text-[#4a4a4a] pt-[4px]">Description</span>
        <Box className="ml-[22px] w-[865px] h-[50px]" />
      </div>
      <div className="flex items-center h-[25px] mt-[8px]">
        <span className="w-[207px] text-right text-[10px] text-[#4a4a4a]">Conditions</span>
        <div className="ml-[22px] flex gap-[4px]"><Btn>Add Filter Condition</Btn><Btn>Add "OR" Clause</Btn></div>
      </div>
      <div className="flex ml-[229px] mt-[8px]">
        <Box arrow="solid" className="w-[187px] h-[25px]">State</Box>
        <Box arrow="line" className="ml-[4px] w-[113px] h-[25px]">is one of</Box>
        <div className="ml-[5px] w-[162px] h-[66px] px-[7px] py-[3px] border border-[#e0e2e4] text-[9.5px] text-[#4a4a4a] leading-[14px] overflow-hidden">
          <div>New</div>
          <div>In Progress</div>
          <div>On Hold</div>
          <div className="bg-[#c4c6c8]">Resolved</div>
          <div>Closed</div>
        </div>
        <div className="ml-[46px] flex gap-[4px]"><Btn>AND</Btn><Btn>OR</Btn><Btn>✕</Btn></div>
      </div>
      <div className="flex gap-[5px] ml-[14px] mt-[17px]"><Btn>Update</Btn><Btn>Delete</Btn></div>
      <Related className="ml-[10px] mt-[8px]" links={["Convert this to UI Policy"]} />
      <div className="mx-[10px] mt-[16px]">
        <ListBar title="Data Policy Rules" search="for text" pager="to 2 of 2" />
        <FilterRow text="Data Policy = Make close info mandatory when resolved or closed" />
        <ColHead cols={dpCols} className="h-[22px] mt-[4px]" />
        <ListRows cols={dpCols} rows={[["close_code", "True", "Leave alone"], ["close_notes", "True", "Leave alone"]]} />
        <ActionsRow text="to 2 of 2" className="mt-[14px]" />
      </div>
    </Card>
  );
}

const actionCols = [
  { label: "Name", w: "w-[172px]", link: true },
  { label: "Table", w: "w-[92px]" },
  { label: "Comments", w: "w-[276px]" },
  { label: "Form action", w: "w-[97px]" },
  { label: "List action", w: "w-[86px]" },
  { label: "Active", w: "w-[70px]" },
  { label: "Order ▲", w: "w-[74px]", right: true },
  { label: "Condition", w: "w-[210px]" },
  { label: "Updated", w: "w-[96px]" },
];

function uiAction(name, table, comment, form, list, active, order, cond) {
  return [name, table, comment, form, list, active, order, cond, "2021-09-09 08:27:52"];
}

function UiActions() {
  const inc = "Incident [incident]";
  const task = "Task [task]";
  const follow = uiAction("Follow on Live Feed", task, <>Adds users to the Live Feed for this document<br />If no feed exists, it is created<br />This is for Sabs, forces have the redirect</>, "false", "true", "true", "100", "!sn_sc.fireUtils.isEnabled()&& new SNC...");
  follow.tall = true;
  return (
    <Card className="h-[713px]">
      <ListBar title="UI Actions" search="Order" pager="to 20 of 90" end={false} dark pulse className="!h-[36px]" />
      <FilterRow list text="All > Table = incident .or. Table in incident, task" className="mt-[7px]" />
      <ColHead cols={actionCols} noSearch className="h-[23px] mt-[6px]" />
      <ListRows
        cols={actionCols}
        tall="h-[34.7px]"
        rows={[
          uiAction("Assign to me", inc, "Assign the incident to current user", "false", "false", "true", "10", "current.active==true && current.assigned..."),
          uiAction("On-Call: Roster and Escalation details", inc, "", "true", "false", "false", "90", "!.ifActive(current.assignment_group && ..."),
          uiAction("Create Request", inc, "", "false", "false", "true", "100", "current.incident_state != global.Inciden..."),
          uiAction("Create Outage", task, "", "true", "false", "true", "100", "current.getRecordClassName() == 'inciden..."),
          uiAction("Create Change Request", inc, "", "false", "false", "true", "100", "current.state != IncidentState.CLOSED &&..."),
          uiAction("Create Problem", inc, "", "true", "false", "true", "100", "current.incident_state != IncidentState..."),
          uiAction("Resolve", inc, "", "true", "false", "true", "100", "new global.IncidentUtils().canResolveInc..."),
          uiAction("Assign to me", inc, "Assign the incident to current user for List context menu", "false", "true", "true", "100", ""),
          uiAction("Assign to me", task, "", "false", "true", "true", "100", "gs.hasRole('itil')"),
          uiAction("Create Request", inc, "", "true", "false", "true", "100", "current.incident_state != IncidentState..."),
          uiAction("Create Outage", task, "", "false", "false", "true", "100", "gs.hasRole('itil,sn_problem_write,sn_inc..."),
          uiAction("Archive Record", inc, "", "false", "true", "true", "100", "gs.hasRole('\"ACT\"')  ($GlidePluginManage..."),
          uiAction("Add", inc, "", "false", "true", "true", "100", "RP.isRelatedList() && current.canCreate..."),
          uiAction("New", inc, "Many To Many for Incidents", "false", "true", "true", "100", "current.canCreate() && !RP.getListContro..."),
          uiAction("Copy Incident", inc, "", "true", "false", "true", "100", "IncidentUtils.isCopyIncidentEnabled() &&..."),
          follow,
          uiAction("Verify Proposed Changes", task, "Verify the proposed changes against the user defined rules", "true", "false", "true", "100", "(current.sys_class_name == 'change_reque..."),
          uiAction("Proposed Change (to-Roll action)", task, "Verify proposed changes and let a to-be rollback changes were made", "true", "false", "true", "100", "Current.sys_class_name and change reque..."),
        ]}
      />
    </Card>
  );
}

function Acl() {
  const roleCols = [{ label: "Role", w: "w-[300px]", link: true }];
  return (
    <Card className="h-[712px]">
      <Header title="Access Control" sub="problem.opened_at">
        <HeadIcons clip={false} up="dim" />
      </Header>
      <div className="flex mt-[24px]">
        <div className="w-[600px]">
          <Row label="Type"><Box gray>record</Box></Row>
          <Row label="Operation"><Box gray>write</Box></Row>
          <Row label="Admin overrides"><Tick focus /></Row>
          <Row label="Protection policy"><Box gray>-- None --</Box></Row>
        </div>
        <div>
          <Row label="Application" right><Box gray>Global</Box><LookupBtn /></Row>
          <Row label="Active" right><Tick on gray /></Row>
          <Row label="Advanced" right><Tick gray /></Row>
        </div>
      </div>
      <Row label="Name"><Box gray className="w-[866px] h-[26px]">problem.opened_at</Box></Row>
      <div className="flex">
        <span className="w-[207px] text-right text-[10px] text-[#4a4a4a] pt-[4px]">Description</span>
        <Box gray className="ml-[22px] w-[866px] h-[50px] !items-start pt-[4px]">Allow write for opened_at to problem, for users with role nobody</Box>
      </div>
      <div className="flex items-center justify-between h-[33px] mx-[14px] mt-[10px] border-t border-[#eceeef] text-[14px] text-[#4a4a4a]">
        Definition
        <ChevronDown size={14} strokeWidth={2.5} />
      </div>
      <div className="mx-[10px] mt-[11px]">
        <Note className="h-[115px]">
          Access Control Rules allow access to the specified resource if all three of these checks evaluate to true:
          <ol className="list-decimal pl-[30px]">
            <li>The user has one of the roles specified in the Role list, or the list is empty.</li>
            <li>Conditions in the Condition field evaluate to true, or conditions are empty.</li>
            <li>The script in the Script field (advanced) evaluates to true, or sets the variable "answer" to true, or is empty.</li>
          </ol>
          <div className="mt-[6px]">The three checks are evaluated independently in the order displayed above.</div>
          <div className="mt-[6px] underline">More Info</div>
        </Note>
        <div className="flex items-center h-[35px] mt-[16px] bg-[#e6e8ea] pl-[10px] pr-[8px] text-[9px] text-[#5a5a5a]">
          <span className="-mt-[10px]">Requires role</span>
          <Pager text="to 1 of 1" light />
          <Maximize size={9} color="#888" className="ml-[6px]" />
        </div>
        <ColHead cols={roleCols} noSearch className="h-[24px]" />
        <ListRows cols={roleCols} rows={[["nobody"]]} noBox />
      </div>
      <div className="flex mt-[30px]">
        <span className="w-[207px] text-right text-[10px] text-[#4a4a4a]">Condition</span>
        <div className="ml-[22px] text-[9.5px] text-[#4a4a4a] leading-[18px]">
          <div className={link}>16 records match condition</div>
          <div>(empty)</div>
        </div>
      </div>
      <Related className="ml-[12px] mt-[17px]" links={["Show ACL Execution Plan"]} />
    </Card>
  );
}

function WsField({ label, value, arrow, search }) {
  return (
    <div className="h-[48.5px] pt-[6px]">
      <div className="text-[8px] text-[#777] leading-[10px]">{label}</div>
      <div className="flex items-center justify-between h-[20px] mt-[1px] border-b-2 border-[#d3d6d8] text-[10px] font-semibold text-[#4a4a4a]">
        {value}
        {arrow && <span className="text-[8px] ml-auto">▼</span>}
        {search && <Search size={8} className="ml-auto" />}
      </div>
    </div>
  );
}

function KbCard({ title, text }) {
  return (
    <div className="h-[63px] mb-[8px] px-[10px] pt-[6px] rounded-[2px] border border-[#e8eaec] shadow-[0_1px_3px_rgba(0,0,0,0.22)]">
      <div className="flex justify-between text-[7px] text-[#777]"><span>▤ Catalog Item</span><span>⋮</span></div>
      <div className="mt-[4px] text-[10px] font-bold text-[#444] whitespace-nowrap">{title}</div>
      <div className="mt-[2px] text-[7px] leading-[8px] text-[#666] overflow-hidden">{text}</div>
    </div>
  );
}

function Workspace() {
  return (
    <Card className="h-[585px]">
      <div className="flex items-center h-[31px] bg-[#2b3c40] border-b border-[#5c7a76] pl-[8px] pr-[14px] text-white">
        <span className="text-[17px] font-bold leading-none">now</span>
        <Search size={11} color="#b9c4c5" className="ml-auto" />
        <Bell size={11} color="#b9c4c5" className="ml-[10px]" />
        <span className="ml-[9px] w-[14px] h-[14px] rounded-full bg-[#c9a58c]" />
      </div>
      <div className="flex">
        <div className="w-[28px] shrink-0 bg-[#2b3c40] h-[554px] text-[#cfd6d7]">
          <div className="flex items-center justify-center h-[29px] bg-[#3f8a74]"><Home size={11} color="#fff" /></div>
          <div className="flex justify-center mt-[9px]"><List size={10} /></div>
          <div className="flex justify-center mt-[9px]"><Settings size={10} /></div>
        </div>
        <div className="flex-1 min-w-0 text-[#4a4a4a]">
          <div className="flex items-center h-[29px] bg-[#f3f5f5] border-b border-[#e2e4e6] text-[9px]">
            <span className="flex items-center gap-[3px] px-[12px]"><Home size={8} />Home</span>
            <span className="flex items-center h-full w-[110px] px-[12px] bg-white border-x border-[#e2e4e6]">INC0000001<span className="ml-auto">▷</span></span>
            <Plus size={10} className="ml-[10px]" />
            <MoreHorizontal size={9} className="ml-auto mr-[10px]" />
          </div>
          <div className="flex items-center h-[40px] border-b border-[#e8eaec] pl-[12px] pr-[10px]">
            <span className="flex items-center w-[110px] h-[26px] px-[8px] border-2 border-[#7fa7c8] text-[9px]">Details</span>
            <MoreHorizontal size={9} className="ml-auto" />
          </div>
          <div className="flex items-start h-[95px] pl-[17px] pr-[12px] pt-[17px] border-b border-[#e2e4e6]">
            <div>
              <div className="text-[19px] leading-[22px] text-[#5a5a5a]">Email server is down. <Star size={10} className="inline ml-[3px]" /></div>
              <div className="flex gap-[10px] mt-[3px] text-[6.5px] leading-[7px] text-[#777]"><span>Priority</span><span className="ml-[12px]">State</span><span>Category</span></div>
              <div className="flex gap-[6px] mt-[3px] text-[9.5px] leading-[11px]"><span>1 - Critical</span><span>New</span><span>Software</span></div>
              <div className="flex gap-[21px] mt-[15px] text-[9.5px] leading-[17px] whitespace-nowrap">
                <span className="text-[#3f8a74] border-b-2 border-[#3f8a74] h-[19px]">Details</span>
                <span>Task SLAs</span><span>Affected CIs</span><span>Impacted Services/CIs</span><span>Child Incidents</span><span>Outages</span>
              </div>
            </div>
            <div className="ml-auto flex gap-[4px] -mt-[3px] text-[9.5px]">
              {["Assign (sync)", "Resolve", "Save", "⋯"].map((b) => (
                <span key={b} className="flex items-center h-[24px] px-[9px] bg-[#e8eaec] rounded-[2px] whitespace-nowrap">{b}</span>
              ))}
            </div>
          </div>
          <div className="flex">
            <div className="w-[504px] shrink-0 pl-[17px] pr-[16px] pt-[2px]">
              <div className="text-[7px] leading-[10px] text-[#777]">✱ Required field</div>
              <div className="flex items-center justify-between h-[20px] mt-[6px] text-[14px] -ml-[8px] pl-[8px]">Incident <MoreHorizontal size={8} /></div>
              <div className="grid grid-cols-2 gap-x-[17px] mt-[14px]">
                <div>
                  <WsField label="Number" value="INC0000001" />
                  <WsField label="Caller *" value="Guest Miller" search />
                  <WsField label="Category" value="Software" arrow />
                  <WsField label="Subcategory" value="Email" arrow />
                  <WsField label="Service" value="" search />
                  <WsField label="Service offering" value="" search />
                  <WsField label="Configuration item" value="" search />
                </div>
                <div>
                  <WsField label="Contact type" value="" arrow />
                  <WsField label="State" value="New" arrow />
                  <WsField label="Impact" value="1 - High" arrow />
                  <WsField label="Urgency" value="1 - High" arrow />
                  <WsField label="Priority" value="1 - Critical" />
                  <WsField label="Assignment group" value="" search />
                  <WsField label="Assigned to" value="" search />
                </div>
              </div>
            </div>
            <div className="w-[395px] shrink-0 border-x border-[#e8eaec]">
              <div className="h-[164px] bg-[#f4f6f5] px-[14px] pt-[16px]">
                <div className="flex items-center justify-between text-[14px]">Compose <Lock size={9} /></div>
                <div className="flex gap-[12px] mt-[14px] text-[9px] font-semibold">
                  <span className="text-[#3f6f60] border-b-2 border-[#3f8a74] pb-[2px] px-[10px]">● Comments</span>
                  <span>▢ Work notes (Private)</span>
                </div>
                <div className="h-[44px] mt-[1px] bg-white border border-[#d3d6d8] px-[4px] text-[9px] text-[#999]">Type your Comments here</div>
                <div className="flex items-center justify-between mt-[4px] text-[8px] text-[#888]">
                  <span>▤ Fairgate viewable content</span>
                  <span className="flex items-center h-[22px] px-[8px] bg-[#eceeef] text-[9px]">Post Comments</span>
                </div>
              </div>
              <div className="px-[14px] pt-[28px]">
                <div className="flex items-center text-[14px]">
                  Activity
                  <Filter size={10} className="ml-auto" />
                  <SlidersHorizontal size={10} className="ml-[12px]" />
                  <MoreHorizontal size={10} className="ml-[12px]" />
                </div>
                <div className="h-[64px] mt-[12px] bg-[#f6eec9] px-[8px] pt-[6px]">
                  <div className="flex items-center gap-[8px]">
                    <span className="flex items-center justify-center w-[26px] h-[26px] rounded-full bg-[#eedc9a]"><User size={13} /></span>
                    <div className="leading-[11px]">
                      <div className="text-[9.5px] font-bold">System Administrator</div>
                      <div className="text-[7px] text-[#777]">2018-08-29 11:35:02 · Work notes</div>
                    </div>
                  </div>
                  <div className="mt-[5px] text-[9.5px] font-semibold whitespace-nowrap">updated the priority to high based on the criticality of the incident.</div>
                </div>
                <div className="flex items-center gap-[8px] mt-[8px] pl-[8px]">
                  <span className="flex items-center justify-center w-[26px] h-[26px] rounded-full bg-[#f1d5d0]"><SquarePen size={13} /></span>
                  <div className="leading-[11px]">
                    <div className="text-[9.5px] font-bold">System Administrator</div>
                    <div className="text-[7px] text-[#777]">2018-08-29 11:35:02 · Field changes</div>
                  </div>
                </div>
                <div className="mt-[8px] pl-[8px] text-[9.5px] leading-[18px]">
                  <div className="flex"><span className="w-[65px]">Impact</span><span className="font-semibold">1 - High</span></div>
                  <div className="flex"><span className="w-[65px]">Incident state</span><span className="font-semibold">New</span></div>
                  <div className="flex"><span className="w-[65px]">Opened by</span><span className="font-semibold">System Administrator</span></div>
                </div>
              </div>
            </div>
            <div className="w-[305px] shrink-0 pl-[18px] pr-[18px] pt-[20px]">
              <div className="text-[14px]">Agent Assist</div>
              <div className="flex items-center mt-[9px]">
                <span className="flex items-center gap-[4px] w-[237px] h-[22px] border-b border-[#a9adb0] text-[9px] text-[#777]"><Search size={9} />Email server is down</span>
                <span className="flex items-center justify-center ml-[10px] w-[22px] h-[22px] border border-[#d3d6d8]"><Settings size={9} /></span>
              </div>
              <div className="mt-[12px]">
                <KbCard title="New Email Account" text="New Email Creation" />
                <KbCard title="Reboot Windows Server" text="Reboot a Windows server, when everything in the server is functioning but there is a Windows service that needs restarting" />
                <KbCard title="Server Tuning" text="Request a mail server tuning" />
                <KbCard title="Application Server (Standard)" text="Dell 2850 Dual Xeon Mixed Server" />
                <KbCard title="" text="" />
              </div>
            </div>
            <div className="flex-1 flex flex-col items-center gap-[14px] pt-[10px] text-[#3f8a74]">
              <Bookmark size={9} />
              <SquarePen size={9} color="#666" />
              <FileText size={9} color="#666" />
            </div>
          </div>
        </div>
      </div>
    </Card>
  );
}

export default function App() {
  return (
    <div className="w-[1373px] h-[997px] overflow-hidden bg-white [font-family:Lato,sans-serif]">
      <div className="[zoom:0.33333] flex pl-[36px] pt-[24px]">
        <div className="w-[1260px] flex flex-col">
          <FormDesign />
          <div className="mt-[84px]"><Configure /></div>
          <div className="mt-[78px]"><TableIncident /></div>
          <div className="mt-[89px]"><DictEntry /></div>
          <div className="mt-[86px]"><Attributes /></div>
        </div>
        <div className="ml-[129px] w-[1260px] flex flex-col">
          <Choices />
          <div className="mt-[57px]"><UiPolicy /></div>
          <div className="mt-[88px]"><BusinessRules /></div>
          <div className="mt-[88px]"><ClientScript /></div>
          <div className="mt-[90px]"><ServiceManagement /></div>
        </div>
        <div className="ml-[135px] w-[1260px] flex flex-col">
          <DataPolicy />
          <div className="mt-[100px]"><UiActions /></div>
          <div className="mt-[87px]"><Acl /></div>
          <div className="mt-[90px]"><Workspace /></div>
        </div>
      </div>
    </div>
  );
}
